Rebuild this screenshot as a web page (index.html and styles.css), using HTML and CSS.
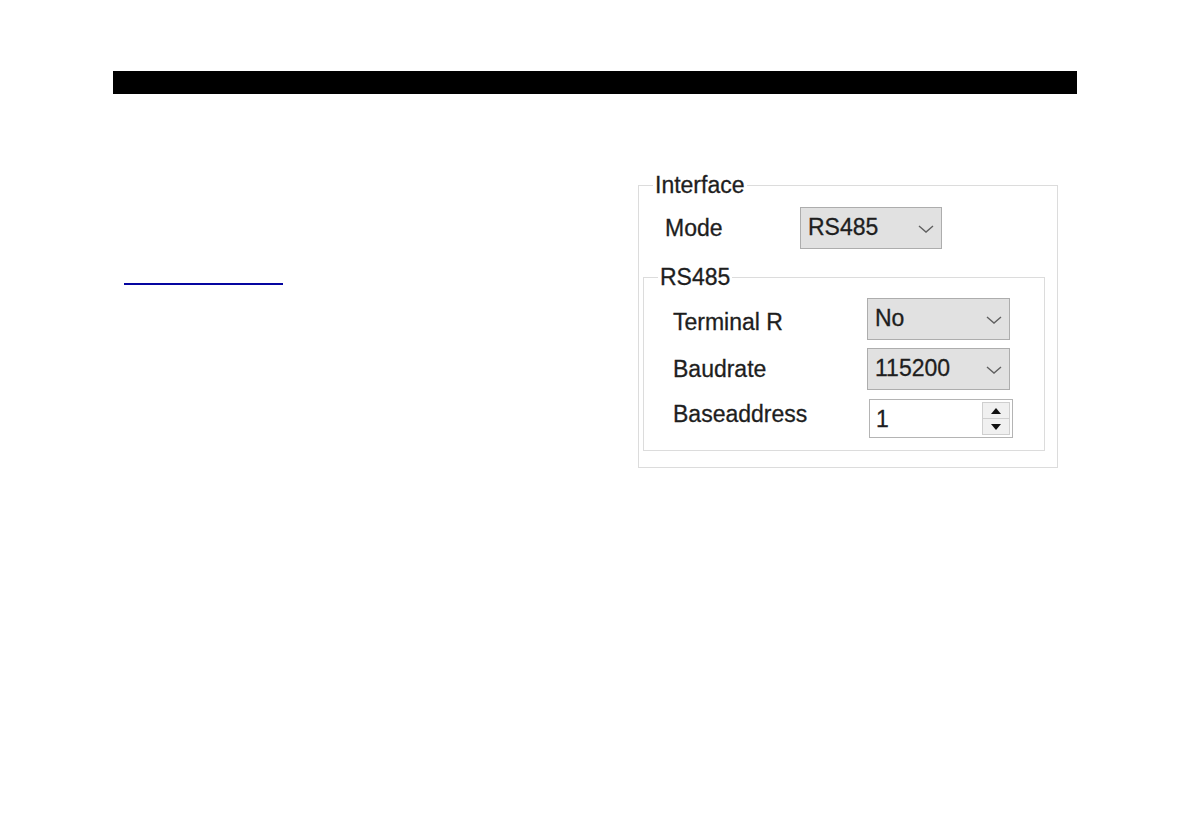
FILE: index.html
```html
<!DOCTYPE html>
<html>
<head>
<meta charset="utf-8">
<link rel="stylesheet" href="styles.css">
</head>
<body>
<div class="page">
  <div class="topbar"></div>
  <div class="content">
    <div class="leftcol">
      <a class="link" href="#"></a>
    </div>
    <fieldset class="group outer">
      <legend>Interface</legend>
      <div class="row mode-row">
        <span class="label">Mode</span>
        <div class="combo mode-combo"><span>RS485</span><svg class="chev" width="16" height="8" viewBox="0 0 16 8"><path d="M1 1 L8 7 L15 1" fill="none" stroke="#606060" stroke-width="1.4"/></svg></div>
      </div>
      <fieldset class="group inner">
        <legend>RS485</legend>
        <div class="grid">
          <span class="label lab-term">Terminal R</span>
          <div class="combo"><span>No</span><svg class="chev" width="16" height="8" viewBox="0 0 16 8"><path d="M1 1 L8 7 L15 1" fill="none" stroke="#606060" stroke-width="1.4"/></svg></div>
          <span class="label">Baudrate</span>
          <div class="combo"><span>115200</span><svg class="chev" width="16" height="8" viewBox="0 0 16 8"><path d="M1 1 L8 7 L15 1" fill="none" stroke="#606060" stroke-width="1.4"/></svg></div>
          <span class="label lab-base">Baseaddress</span>
          <div class="spin">
            <span class="spin-val">1</span>
            <div class="spin-btns">
              <div class="sbtn"><svg width="10" height="6" viewBox="0 0 10 6"><path d="M0 6 L5 0 L10 6 Z" fill="#111"/></svg></div>
              <div class="sbtn"><svg width="10" height="6" viewBox="0 0 10 6"><path d="M0 0 L5 6 L10 0 Z" fill="#111"/></svg></div>
            </div>
          </div>
        </div>
      </fieldset>
    </fieldset>
  </div>
</div>
</body>
</html>
```

FILE: styles.css
```css
html, body {
  margin: 0;
  padding: 0;
  background: #ffffff;
}
.page {
  padding-top: 71px;
  padding-left: 113px;
  font-family: "Liberation Sans", Arial, sans-serif;
  color: #1e1e1e;
}
.topbar {
  width: 964px;
  height: 23px;
  background: #000;
}
.content {
  display: flex;
  align-items: flex-start;
  margin-top: 80px;
}
.leftcol {
  width: 525px;
  flex: none;
}
.link {
  display: block;
  margin-top: 109px;
  margin-left: 11px;
  width: 159px;
  height: 0;
  border-bottom: 2px solid #0505a0;
}
.group {
  margin: 0;
  padding: 0;
  border: 1px solid #dcdcdc;
  min-width: 0;
}
.group legend {
  font-size: 23px;
  line-height: 22px;
  padding: 0 2px;
  margin-left: 14px;
  color: #1e1e1e;
  -webkit-text-stroke: 0.3px #1e1e1e;
}
.outer {
  width: 420px;
  box-sizing: border-box;
  padding: 11px 12px 16px 0;
}
.label {
  font-size: 23px;
  line-height: 24px;
  white-space: nowrap;
  -webkit-text-stroke: 0.3px #1e1e1e;
}
.row {
  display: flex;
  align-items: center;
}
.mode-row {
  padding-left: 26px;
}
.mode-row .label {
  width: 135px;
}
.combo {
  display: flex;
  align-items: center;
  justify-content: space-between;
  box-sizing: border-box;
  width: 143px;
  height: 42px;
  background: #e1e1e1;
  border: 1px solid #adadad;
  padding: 0 7px 0 7px;
  font-size: 23px;
  -webkit-text-stroke: 0.3px #1e1e1e;
}
.combo span {
  line-height: 24px;
  margin-top: -2px;
}
.chev {
  display: block;
  margin-top: 2px;
}
.mode-combo {
  width: 142px;
}
.inner {
  margin-top: 17px;
  margin-left: 4px;
  padding: 10px 0 12px 0;
}
.grid {
  display: grid;
  grid-template-columns: 194px 146px;
  row-gap: 8px;
  align-items: center;
  padding-left: 29px;
}
.lab-term {
  margin-top: 6px;
}
.lab-base {
  margin-top: -8px;
}
.spin {
  display: flex;
  align-items: center;
  justify-content: space-between;
  box-sizing: border-box;
  margin-left: 2px;
  margin-top: 1px;
  width: 144px;
  height: 39px;
  border: 1px solid #b4b4b4;
  background: #fff;
  padding: 2px 2px 2px 6px;
  font-size: 23px;
  -webkit-text-stroke: 0.3px #1e1e1e;
}
.spin-val {
  line-height: 24px;
}
.spin-btns {
  display: flex;
  flex-direction: column;
  width: 28px;
  height: 33px;
  border: 1px solid #cfcfcf;
  box-sizing: border-box;
  background: #f0f0f0;
}
.sbtn {
  flex: 1;
  display: flex;
  align-items: center;
  justify-content: center;
}
.sbtn + .sbtn {
  border-top: 1px solid #cfcfcf;
}
```
